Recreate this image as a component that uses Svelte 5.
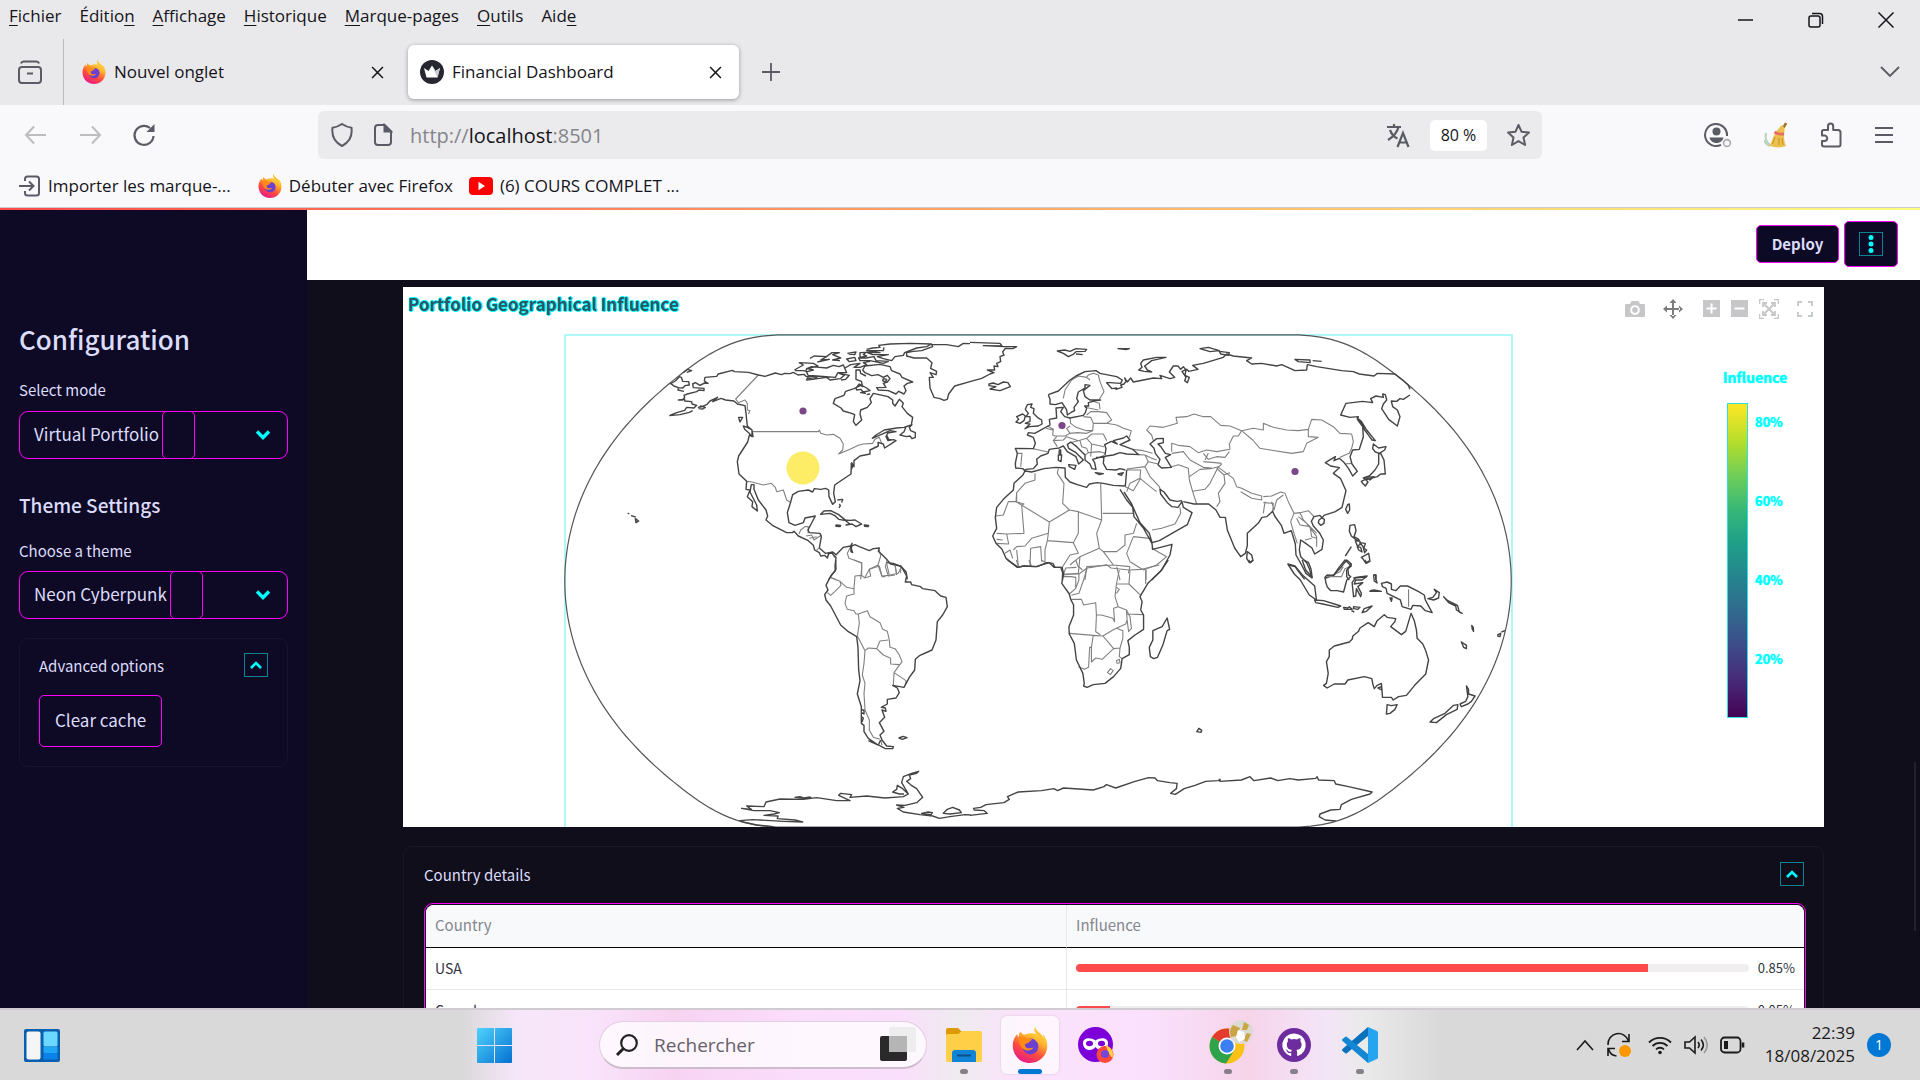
<script>
  const menus = [
    ['', 'F', 'ichier'],
    ['Éditio', 'n', ''],
    ['', 'A', 'ffichage'],
    ['', 'H', 'istorique'],
    ['', 'M', 'arque-pages'],
    ['', 'O', 'utils'],
    ['Aid', 'e', '']
  ];
  const ticks = ['80%', '60%', '40%', '20%'];
  const rows = [
    { country: 'USA', value: 85, label: '0.85%' },
    { country: 'Canada', value: 5, label: '0.05%' }
  ];

  // Outline of the globe in the Natural Earth projection.
  const cx = 1038;
  const cy = 581;
  const k = 173;
  function project(lon, lat) {
    const a = lat * lat;
    const b = a * a;
    return [
      cx + k * lon * (0.8707 - 0.131979 * a + b * (-0.013791 + b * (0.003971 * a - 0.001529 * b))),
      cy - k * lat * (1.007226 + a * (0.015085 + b * (-0.044475 + 0.028874 * a - 0.005916 * b)))
    ];
  }
  const rim = [];
  for (let i = -60; i <= 60; i++) rim.push(project(-Math.PI, (i / 60) * (Math.PI / 2)));
  for (let i = 60; i >= -60; i--) rim.push(project(Math.PI, (i / 60) * (Math.PI / 2)));
  const sphere = 'M' + rim.map((p) => p[0].toFixed(1) + ' ' + p[1].toFixed(1)).join('L') + 'Z';

  // Land outlines and country borders, one sheet per part of the world.
  const sheets = [
    {
      place: 'translate(550 320) scale(.33333)',
      coast: `M360 192 376 183 388 170 394 172 398 184 416 185 418 195 405 197 398 204 385 203 384 210 402 214 M362 190 372 198 385 203 M400 158 412 148 425 152 410 157
M358 287 380 278 404 271 410 262 432 264 440 256 426 252 425 245 404 243 404 238 385 240 398 240 404 232 402 226 412 222 440 215 447 210 462 212 462 205 430 203 428 192 436 188 450 196 464 189 474 190 463 183 465 172 500 169 505 162 547 151 553 155 596 157 625 165 645 169 676 159 694 164 704 160 720 161 730 157 744 165 762 163 768 169 800 172 790 178 772 174 770 180 830 172 840 180 871 176 883 166 868 160 898 166 887 178 873 180
M358 287 390 284 418 277 428 272 M444 264 452 258 466 262 458 267 446 266 M450 262 470 254 480 243 503 232 488 245 513 235 527 240 552 243 562 252 585 257 588 280 590 300 592 318 606 330 609 350 598 346 593 366 566 408 562 425 567 462 590 484 588 508 600 510 592 530 608 545 606 560 622 573 620 555 600 516 604 494 612 494 612 508 625 540 648 570 653 588 648 600 670 618 710 638 727 638 732 634 745 648 775 662 790 676 794 690 808 698 812 708 824 706 832 714 837 700 847 700 855 712
M857 703 848 696 826 700 808 684 814 650 810 640 778 638 774 630 796 588 765 594 760 608 735 616 717 608 712 578 722 546 728 524 745 514 775 510 788 516 793 506 812 508 827 505 836 510 837 530 848 553 856 545 851 520 854 495 876 480 903 462 904 430 912 440 912 422 930 408 960 402 960 390 985 378 984 367 1000 372 1004 384 1038 362 1030 359 1014 362 1008 350 1013 339 1038 335 1020 332 967 355 978 345 1003 330 1040 324 1062 322 1084 315 1088 292 1072 280 1056 260 1060 250 1048 238 1035 258 1028 250 1028 240 1014 230 970 220 960 236 964 248 952 262 932 270 930 282 935 300 918 316 910 305 914 284 905 280 880 273 873 264 850 250 855 236 882 226 887 214 912 206 932 196 938 200 934 184 918 178 918 150 930 150 932 160 948 168
M945 138 990 133 1020 140 1025 152 1050 162 1056 172 1088 186 1072 190 1062 198 1068 212 1062 222 1046 214 1038 222 1015 212 985 210 980 203 1008 202 1000 190 1012 186 1020 176 1012 166 1000 172 984 164 965 167 945 158 938 150Z
M733 150 760 135 748 128 790 130 804 138 772 146 790 150 772 155 760 152 735 152 M770 146 785 140 830 144 850 136 867 140 880 135 890 158 864 158 856 172 800 168 774 166 768 152Z M780 115 792 108 830 110 812 120 838 118 802 126 M826 112 846 98 868 98 848 104 872 114 848 120 870 122 M885 144 902 134 930 130 912 142 930 142 950 134 940 128 960 124 M892 100 918 96 914 104 896 102 M930 98 948 97 940 104 950 108 930 112Z M890 117 914 112 918 122 898 125Z M926 114 948 114 972 110 978 122 1015 124 1000 130 960 122 930 122Z
M950 88 968 84 990 82 986 76 1020 72 1080 70 1144 72 1130 80 1100 84 1064 98 1060 106 1035 110 1025 122 1000 116 982 110 1015 104 968 104 950 97 990 98 950 92 1000 92 1002 82
M918 204 928 192 950 204 960 212 940 216 932 208 920 210Z M932 218l10-3 4 5zM950 224l10-2M1000 176l10 2-4 8-8-4z
M1050 345 1062 335 1068 320 1086 314 1078 322 1082 332 1096 338 1096 352 1086 356 1080 348 1070 350Z M1010 346 1016 358 1026 360
M1260 71 1240 70 1225 80 1190 74 1145 73 1148 80 1115 92 1090 94 1070 98 1070 108 1092 114 1130 114 1146 128 1142 145 1160 154 1158 164 1140 158 1150 172 1138 172 1140 204 1152 232 1170 236 1182 241 1192 238 1196 222 1214 198 1260 185
M812 583 822 573 842 572 866 584 888 602 866 598 856 588 840 580Z M884 600 900 601 915 600 935 612 918 620 906 612 888 615 900 612Z M858 615l14 1-2 4-12-1zM943 615l13 1-2 4-10-1zM862 540l16-2-3 10M868 552l3 5-4 7M233 579l5 3M243 587l14 4M256 596l10 7-8 5z
M580 318 592 322 606 330 606 350 596 338 584 328Z M566 292l12 0-8 14zM884 426M905 428l4 8-4 10z
M837 778 845 764 856 752 855 738 858 712 850 705 M857 706 880 682 902 678 906 670 904 686 908 698 903 695 902 680 915 674 928 680 958 692 970 686 988 684 985 694 998 706 1010 718 1022 732 1052 738 1068 755 1072 778`,
      border: `M625 165 557 237 565 248 585 240 592 250 592 270 600 272 595 282 M608 335 805 335 808 330 812 340 830 345 850 343 870 355 880 372 878 390 866 402 900 388 925 376 940 372 968 370 975 358 988 352 995 370 M590 484 606 486 640 495 664 490 676 502 680 515 700 510 710 540 720 546 M747 642 752 630 765 620 775 620 774 640 M768 648 785 645 792 660 815 645 M778 655 800 650 M800 690 806 685 M836 700 832 710
M902 680 892 700 897 715 935 728 935 745 932 778 M988 690 992 708 984 735 996 770 M984 735 958 748 945 772 M1012 718 1006 740 1015 768 1035 765 M1035 735 1040 765 M1052 738 1052 760 M840 772 860 780 M996 770 1006 770`
    },
    {
      place: 'translate(970 320) scale(.33333)',
      coast: `M0 67 90 70 96 78 40 77 100 80 140 80 128 86 106 85 98 96 102 105 90 110 92 125 80 130 84 140 72 138 74 150 52 150 72 158 60 162 35 175 0 185
M57 192 70 189 84 194 100 186 114 188 121 200 90 212 60 207 78 200 57 197Z M262 93 284 90 300 94 318 86 350 88 345 94 318 95 308 104 295 110 280 100Z M318 102l20 2M444 86l34 0-10 3z
M506 150 516 142 512 130 520 120 560 112 588 112 545 122 524 138 532 150 545 156 522 154Z M690 86 715 82 748 92 720 95Z M748 94 778 98 775 106 752 102Z M975 118 1020 120 1020 128 985 125Z M1028 122l27 2
M235 224 265 213 300 180 318 168 345 155 378 152 390 160 440 170 457 180 452 190 420 188 410 188 426 206 440 204 438 208 456 202 452 195 462 192 468 184 464 174 472 186 482 174 490 186 550 174 575 176 570 166 600 176 614 172 598 156 610 138 624 138 632 148 640 140 648 150 645 166 658 172 652 188 644 182 648 172 636 154 650 148 656 154 684 148 668 136 700 130 720 124 760 112 770 102 790 108 845 114 830 122 845 132 875 130 920 138 935 134 975 152 1010 150 1012 134 1040 140 1115 152 1150 155 1168 162 1212 168 1222 160 1275 162 1298 180 1314 194 1320 208
M1320 225 1300 238 1290 236 1280 244 1264 243 1268 260 1282 270 1290 290 1282 318 1256 298 1235 266 1240 252 1250 240 1246 224 1238 222 1240 232 1218 228 1202 236 1208 248 1178 244 1128 250 1112 285 1140 292 1165 290 1162 298 1178 320 1180 350 1168 388 1148 390 1140 410 1146 432 1162 454 1148 468 1136 446 1120 425 1108 415 1092 422 1096 410 1066 428 1082 438 1108 443 1090 460 1112 476 1128 512 1116 562 1096 575 1062 586 1056 594 1050 586 1032 590 1024 604 1030 618 1048 638 1060 660 1056 688 1034 702 1026 684 1004 668 992 660 988 690 992 710 1010 728 1018 746 1026 774 1008 760 995 735 978 705 976 672 964 632 942 640 934 616 914 588 908 574 890 590 876 592 866 608 832 640 832 676 826 700 812 710 794 684 772 630 766 592 750 592 738 570 716 552 672 552 640 545 M636 542 620 544 600 540 582 516 570 508 572 522 592 548 606 560 624 562 636 545 640 562 666 578 652 614 606 640 568 662 546 668 538 640 510 608 484 550 462 516 M450 508 470 540 488 562 492 590 520 624 546 670 548 688 606 673 600 705 575 750 545 780
M470 450 466 498 430 496 400 490 382 488 358 492 350 502 322 494 300 486 286 472 285 444 258 442 222 446 185 456 165 453 158 466 132 490 130 510 100 538 80 562 76 592 80 625 68 648 78 670 96 688 108 715 142 742 160 738 198 740 238 728 252 742 272 742 278 758 277 780
M163 450 158 446 137 444 136 430 142 400 136 385 190 386 196 370 190 352 172 345 175 338 194 340 216 328 240 315 238 298 260 294 258 264 280 262 272 275 284 290 300 294 340 286 346 278 350 265 344 258 356 258 355 248 378 242 392 240 360 240 345 230 340 212 360 196 345 194 345 204 325 216 320 235 325 245 312 262 314 272 305 276 292 285 290 270 276 248 256 254 240 252 240 238 235 224
M162 454 168 448 190 446 202 432 200 418 212 408 234 400 238 388 258 385 268 384 280 378 292 395 318 410 326 432 340 420 318 398 296 385 292 374 302 366 320 380 345 405 345 420 360 432 366 446 378 448 374 428 368 418 382 414 402 408 400 430 410 448 438 450 450 446 466 450
M405 405 408 386 404 374 424 364 442 372 430 362 460 354 470 348 480 360 450 374 488 388 506 404 470 402 450 398 430 405 408 408 398 412 378 412 M296 434l22 2-4 12-16-8zM265 405l10 0-2 20-8-4zM268 390l4 0 0 12-5-2zM376 458l24 3-12 3zM444 462l16-4-6 8z
M540 372 560 356 580 355 580 368 564 372 574 382 586 400 602 404 586 412 592 422 604 442 575 444 564 434 570 418 556 400 552 385Z
M165 326 178 320 205 318 216 312 215 300 202 292 190 280 192 266 182 262 186 252 172 254 166 268 175 280 168 290 180 290 180 304 166 310 180 312Z M138 306 150 310 162 302 166 288 158 282 140 290 146 298Z
M832 695 845 705 849 722 838 728 830 715ZM1133 554l5-2 1 18-6 10-6-12zM1047 600l8-6 8 4-1 12-10 6-7-8z M1210 372 1226 384 1248 380 1244 390 1228 400 1216 396 1208 386Z M1232 400 1242 420 1246 462 1232 462 1222 470 1192 478 1180 474 1198 468 1215 450 1226 432 1226 402Z M1174 484 1186 478 1194 486 1186 498 1178 490ZM1190 472 1212 470 1200 480ZM1162 294 1174 304 1190 330 1216 362 1206 360 1196 346 1184 330 1176 310Z
M1140 616 1154 614 1158 632 1152 650 1166 658 1168 664 1156 658 1144 648 1138 634ZM1156 662l14 2 0 10-8 4zM1170 668l16 2-4 14zM1162 680l10 2 4 14-10-6zM1180 684l10 6-6 8zM1174 712 1196 700 1200 724 1188 730 1180 718ZM1126 708l18-28
M955 735 975 740 990 760 1004 778 M1064 775 1092 765 1105 745 1125 720 1144 738 1130 750 1130 770 1138 780 M1150 774l40-3M1212 765l6 0 0 14`,
      border: `M280 235 285 210 305 180 325 168 350 172 355 165 370 160 385 165 M350 172 360 180 M385 165 390 185 402 215 388 238 M370 244 388 250 390 268 M345 262 385 270 M350 285 362 275 385 275 410 278 425 300 410 310 370 310 362 292 340 290 M300 294 302 310 318 322 350 332 368 332 370 310 M410 310 440 315 460 325 484 332 478 352 M368 332 350 340 322 338 300 340 290 325 300 318 M300 340 285 348 255 348 248 345 250 328 232 318 M228 325 248 330 M250 362 280 360 290 350 325 362 350 355 365 342 400 342 410 362 M260 350 250 362 262 380 M325 362 300 368 M330 362 335 380 350 385 355 398 345 405 M350 355 365 372 402 380 M355 398 390 395 405 400 M365 372 362 410 M142 400 156 400 152 440 M190 386 234 396 M488 388 520 392 548 400 M505 404 525 405 545 415 560 420 M525 405 535 425 565 432 M535 425 525 440 470 447 M525 440 540 470 568 500 572 512 M470 450 512 450 510 475 480 490 470 515 M510 475 540 500 560 515 M512 475 490 512 466 500
M545 345 530 330 540 318 580 322 622 310 618 292 650 290 672 282 700 290 722 290 752 316 780 318 815 332 805 348 790 348 778 372 780 388 740 395 710 390 685 398 660 380 625 376 605 370 605 395 M545 345 550 362 M605 400 640 395 660 420 700 442 725 444 M600 442 625 434 655 445 658 480 668 515 680 552 M658 470 690 448 722 446 745 440 720 490 705 508 668 514 M740 445 762 465 780 458 M762 465 765 490 745 520 750 545 740 560 M700 400 715 418 740 410 765 412 778 395 M700 425 735 428 755 430 M715 400 705 420 M755 432 745 442 790 475 800 500 815 505 845 520 875 528 875 540 845 535 812 515 M880 530 905 528 932 516 945 520 955 545 972 580 990 578 1015 572 1032 590 M885 545 880 580 M880 548 910 550 908 574 M905 545 912 570 920 540 940 525 M972 580 962 605 972 640 982 670 M985 590 1010 610 1040 650 1040 680 M980 595 990 615 1020 620 1025 650 1040 655 M1005 660 1025 655 M990 578 1000 600 1040 640
M815 332 850 325 880 330 880 310 910 322 950 330 985 332 1015 328 1015 350 1045 352 1010 370 1000 395 965 400 900 390 870 385 848 360Z M1015 328 1025 298 1055 300 1090 320 1110 340 1145 342 1150 365 1145 385 1138 400 1110 412 M1125 432 1145 430
M195 460 195 480 165 490 140 518 138 545 238 606 298 570 325 575 395 600 392 490 M265 445 262 460 282 490 278 550 298 570 M138 545 162 552 155 555 162 640 110 642 M140 518 140 545 115 545 100 585 78 588 M238 606 235 640 185 655 165 678 140 680 130 690 M325 575 325 640 310 668 232 662 225 690 225 725 M235 640 232 662 M80 640 110 642 116 672 78 670 M80 658 98 660 M105 700 120 690 128 715 M140 690 145 738 M180 738 182 685 212 680 215 725 M398 580 490 580 M395 600 380 640 388 685 330 710 300 735 M388 685 400 695 440 695 465 675 465 645 490 640 500 610 M490 650 540 655 545 670 M490 650 470 700 480 725 520 750 560 735 590 710 545 685 M400 695 430 735 480 740 M310 668 325 700 300 705 275 745 M330 710 325 760 278 765 M350 740 345 780 M430 735 350 740 M440 740 450 780 M528 750 528 780 M480 740 475 760 M546 630 575 625 615 612 632 580 630 562 M1068 775 1110 755 1120 740`
    },
    {
      place: 'translate(550 560) scale(.33333)',
      coast: `M857 0 858 28 840 52 828 76 834 90 824 104 828 120 842 138 872 195 895 215 920 230 924 262 926 330 930 362 922 402 934 440 934 490 942 496 942 515 955 535 980 552 1006 566 1028 566 1030 560 1010 558 996 540 990 525 1002 514 988 488 1004 472 996 450 1008 454 1006 444 994 442 1012 432 1012 418 1038 414 1048 398 1042 384 1028 376 1062 382 1078 352 1094 330 1096 298 1110 286 1146 270 1158 240 1162 185 1178 165 1192 140 1188 112 1172 108 1155 92 1118 86 1112 80 1085 74 1082 66 1066 66 1070 48 1054 20 1030 10 1010 8 M934 450l8 0 0 12-8-4zM934 470l6 4-4 12M955 542 985 555 992 540 M1047 534l12-5 12 4-14 5z
M568 782 608 779 700 784 758 786 735 780 682 776 684 768 642 766 672 762 688 758 660 752 612 752 575 745 604 748 590 738 642 740 648 726 690 717 760 718 800 713 860 722 900 722 866 706 872 700 905 704 900 712 950 708 1005 714 1060 710 1075 702 1058 686 1042 676 1040 688 1028 696 1048 702 1062 702 M1075 702 1055 668 1060 650 1085 640 1106 634 1100 640 1078 645 1082 656 1070 664 1084 676 1100 686 1118 712 1100 728 1065 736 1040 735 1062 742 1042 745 1060 756 1110 764 1148 768 1168 775 1200 770 1245 764 1262 765 M1115 760l20-4 12 2-4 6zM1180 760 1192 748 1208 742 1228 750 1234 758 1200 762ZM572 784 620 795 670 800 M735 712l15-2 10 4zM762 714l18-3 4 4z`,
      border: `M840 52 870 64 873 76 855 94 842 106 832 98 M870 64 890 82 912 86 912 102 890 108 885 130 892 148 912 152 918 162 925 162 952 152 960 170 990 188 998 208 1012 214 1018 240 1020 262 1035 266 1048 285 1056 305 1032 338 1030 376 M1032 338 1068 362 1066 375 M925 162 928 190 922 228 945 272 955 264 980 266 990 243 1015 240 M980 266 1000 285 1022 295 1022 312 1048 314 M945 272 942 310 937 345 945 370 942 400 945 450 958 480 958 510 970 532 990 538 M992 540 996 556 M912 86 915 48 935 46 945 54 962 48 958 28 988 18 996 48 1018 46 1045 40 1054 20 M935 46 935 10 912 0 M1010 10 1018 46 M1035 14 1040 42`
    },
    {
      place: 'translate(970 560) scale(.35714 .33333)',
      coast: `M105 0 135 22 150 18 188 20 215 8 232 10 238 22 258 22 262 42 257 70 278 102 282 118 290 135 290 165 277 200 278 222 292 250 298 300 316 340 320 370 318 378 328 382 345 374 378 370 402 350 422 325 426 296 446 284 446 262 442 242 462 225 486 208 486 165 478 150 482 125 476 110 498 70 535 32 555 0
M552 174 559 208 552 212 540 255 525 292 514 296 505 290 502 262 512 240 512 212 538 200Z M780 0 785 8 792 0 M635 515l6-10 8 6-2 6z
M890 12 910 18 930 44 965 78 970 120 950 105 925 60 908 42Z M930 0 940 30 958 52 955 28 948 8 935 0 M965 120 990 122 1038 138 1030 142 988 132 968 128ZM1046 142l12 2 4-4 8 8-22 0zM1068 152l8 4M1074 140l18 2-6 6-12-2zM1098 158l6-12 22-8-16 16z
M994 52 1000 45 1018 46 1040 20 1055 0 1068 12 1058 25 1060 45 1066 50 1055 60 1046 96 1028 92 1010 92 1000 80 996 66Z M1072 90 1070 68 1080 52 1112 48 1098 60 1080 60 1076 72 1100 68 1086 80 1096 100 1094 110 1082 86 1080 108 1074 110ZM1130 45l6 0 0 12 4 12-8-6zM1118 94l20 0 14 0-20-4-12 2M1176 114l6 0-2 10zM1105 0l6 8 6-6
M1152 70 1168 66 1180 72 1180 88 1192 92 1205 78 1225 78 1255 94 1272 105 1275 120 1294 158 1275 152 1262 138 1240 136 1235 148 1210 140 1205 120 1168 100 1165 85 1155 80ZM1282 116l14-4 10-14-6-10 14 10-2 16-14 6zM1326 110 1338 122 1365 136 1370 156 1378 160 1362 150 1360 138 1340 128ZM1405 196l4 6 1 12-4-8zM1376 246l14 10 0 10-8-4zM1478 224l8-4-2 10-6-2zM1488 216l10-4
M1000 384 990 376 998 370 1003 340 998 305 1006 290 1006 270 1020 258 1062 246 1070 238 1072 228 1088 214 1092 204 1115 188 1132 200 1140 182 1160 164 1168 172 1192 176 1190 184 1178 200 1208 224 1220 214 1235 160 1244 182 1250 210 1252 235 1268 252 1276 272 1284 300 1276 342 1245 376 1222 406 1200 410 1185 420 1180 412 1155 412 1152 370 1140 376 1132 386 1128 372 1125 356 1104 350 1058 360 1050 372 1020 372Z M1142 384l10-4 0 10zM1168 434 1180 437 1196 434 1190 448 1176 460 1166 462ZM1390 378 1396 388 1396 402 1414 408 1404 424 1394 432 1376 440 1372 432 1388 424 1394 410ZM1366 434 1364 448 1334 464 1306 488 1288 486 1298 476 1330 460 1354 436Z
M0 766 48 760 40 752 12 750 10 745 30 742 45 734 95 728 110 718 105 710 135 696 200 692 235 686 245 692 262 684 345 690 375 680 382 674 408 684 460 665 500 653 518 654 525 662 560 668 580 670 578 686 562 700 575 703 600 686 630 676 660 664 695 662 700 658 700 664 760 660 784 650 795 662 842 654 862 662 895 656 920 660 968 655 972 650 976 660 1020 662 1024 672 1060 680 1126 696 1120 702 1068 718 1040 734 1036 748 1010 750 980 762 978 770 994 780 1024 783`,
      border: `M262 42 305 42 328 24 340 22 382 14 395 24 445 30 480 28 530 15 M262 42 262 50 282 50 296 52 296 85 278 102 M305 42 305 60 296 85 M328 24 318 60 305 100 284 106 M284 118 312 118 318 135 352 128 354 165 368 165 400 175 405 185 402 145 415 140 438 150 440 180 436 192 410 205 400 210 372 228 345 226 278 220 M354 165 352 215 365 224 M345 226 340 262 335 262 332 322 320 328 304 320 M340 262 340 306 352 294 370 298 402 266 420 264 428 235 428 212 410 205 M372 228 390 250 402 266 M420 264 418 290 426 296 M385 338l8-12 8 6-8 12zM410 302l8-4 2 10-8 2zM415 140 406 110 410 72 418 30 M410 72 445 72 478 106 M445 72 448 30 M408 80l10 8-8 12M440 162 486 164 M438 150 448 170 452 205 444 215 440 180 M492 28 492 72 M296 0 302 18 315 30 M130 0 135 18 M165 0 172 18 M200 0 212 8 M262 42 268 24 298 22 M1000 50 1040 50 1050 26 1062 20 M1228 88 1228 140`
    }
  ];
</script>

{#snippet fox(size)}
  <svg width={size} height={size} viewBox="0 0 24 24" aria-hidden="true">
    <defs>
      <linearGradient id="fx" x1=".8" y1="0" x2=".3" y2="1">
        <stop offset="0" stop-color="#fff44f" /><stop offset=".35" stop-color="#ffb32d" />
        <stop offset=".65" stop-color="#ff4f3a" /><stop offset="1" stop-color="#e5178c" />
      </linearGradient>
    </defs>
    <path fill="url(#fx)" d="M15.5 0c-1 2-.3 3.300 1 4.600C14 4 11 4 8.800 5.200 7 5 6.200 4.200 5.800 3 4.700 4 4.500 5.500 4.700 6.600 3.900 6.200 3.500 5.400 3.400 4.600 1 7.500.2 10.500.6 14c.8 5.800 5.500 10 11.400 10 6.400 0 11.500-5 11.500-11.300 0-3.500-1.300-6.300-2.900-8 .2 1 .3 1.700.2 2.500C19.500 3.900 16.300 3 15.500 0z" />
    <path fill="#ffbd3a" d="M16.500 4.600c3.800 2.200 5.400 6.200 3.400 10.200 3-4.500 1-9-1.900-10.800-1.500-1-2.200-2-2.500-4-1 2-.3 3.300 1 4.600z" />
    <circle cx="12.300" cy="13" r="5.300" fill="#6b3fd0" />
    <path fill="#ff8a16" d="M4.700 7c2-1.200 4-.4 5.300.7 1.200-.2 2.700 0 3.600 1-1.200.2-1.400.8-2.200 1.500-1 .8-2.300.7-2.700 1.500-.2.700.2 1.700 1 2.200 1.700 1 3-.2 4.600 0-1.400 1.600-3.300 2.200-5 1.600C5.500 14.500 4.500 10.500 4.700 7z" />
  </svg>
{/snippet}

{#snippet cross(size)}
  <svg width={size} height={size} viewBox="0 0 12 12" aria-hidden="true"><path d="M1 1l10 10M11 1L1 11" stroke="#15141a" stroke-width="1.400" fill="none" /></svg>
{/snippet}

{#snippet combo(id, value, others)}
  <div class="combo">
    <select {id}>
      <option>{value}</option>
      {#each others as o}<option>{o}</option>{/each}
    </select>
    <span class="caret-box"></span>
    <svg class="chev" width="16" height="12" viewBox="0 0 16 12" aria-hidden="true"><path d="M2 2.500L8 8.500 14 2.500" fill="none" stroke="#0ff" stroke-width="3.400" /></svg>
  </div>
{/snippet}

{#snippet fold(label)}
  <button class="fold" aria-label={label}>
    <svg width="14" height="10" viewBox="0 0 14 10" aria-hidden="true"><path d="M2 8l5-5 5 5" fill="none" stroke="#0ff" stroke-width="2.600" /></svg>
  </button>
{/snippet}

<div class="window">
  <header class="top">
    <div class="menubar">
      <nav>
        {#each menus as m}<a href="#menu">{m[0]}<u>{m[1]}</u>{m[2]}</a>{/each}
      </nav>
      <div class="controls">
        <button aria-label="Réduire"><svg width="16" height="16" viewBox="0 0 16 16"><path d="M0 8h15" stroke="#15141a" stroke-width="1.500" /></svg></button>
        <button aria-label="Restaurer"><svg width="16" height="16" viewBox="0 0 16 16" fill="none" stroke="#15141a" stroke-width="1.500"><rect x="1" y="4" width="11" height="11" rx="2" /><path d="M4 1.500h7.500a3 3 0 0 1 3 3V12" /></svg></button>
        <button aria-label="Fermer"><svg width="16" height="16" viewBox="0 0 16 16"><path d="M.5.5l15 15M15.500.5l-15 15" stroke="#15141a" stroke-width="1.500" /></svg></button>
      </div>
    </div>
    <div class="tabs">
      <button class="view" aria-label="Firefox View">
        <svg width="26" height="26" viewBox="0 0 26 26" fill="none" stroke="#5b5b66" stroke-width="2"><rect x="2" y="8" width="22" height="16" rx="3" /><path d="M4 4.500C4.500 3 5.500 2.500 7 2.500h12c1.500 0 2.500.5 3 2" /><path d="M10 14.500h6" /></svg>
      </button>
      <div class="tab">
        {@render fox(24)}
        <span>Nouvel onglet</span>
        <button aria-label="Fermer l’onglet">{@render cross(13)}</button>
      </div>
      <div class="tab active">
        <svg width="24" height="24" viewBox="0 0 24 24" aria-hidden="true"><circle cx="12" cy="12" r="12" fill="#262730" /><path d="M4 8l4.500 3L12 5.500l3.500 5.500L20 8l-2.500 9.500h-11z" fill="#fff" /><path d="M12 5.500l3.500 5.500L20 8l-2.500 9.500z" fill="#c9c9cf" /></svg>
        <span>Financial Dashboard</span>
        <button aria-label="Fermer l’onglet">{@render cross(13)}</button>
      </div>
      <button class="plus" aria-label="Nouvel onglet"><svg width="18" height="18" viewBox="0 0 18 18"><path d="M9 0v18M0 9h18" stroke="#5b5b66" stroke-width="1.800" /></svg></button>
      <button class="list" aria-label="Lister les onglets"><svg width="20" height="12" viewBox="0 0 20 12"><path d="M1 1l9 9 9-9" stroke="#5b5b66" stroke-width="1.800" fill="none" /></svg></button>
    </div>
  </header>

  <div class="navbar">
    <div class="history">
      <button aria-label="Reculer"><svg width="24" height="20" viewBox="0 0 24 20"><path d="M22 10H2M10 1.500L2 10l8 8.500" stroke="#bcbcc1" stroke-width="2" fill="none" /></svg></button>
      <button aria-label="Avancer"><svg width="24" height="20" viewBox="0 0 24 20"><path d="M2 10h20M14 1.500L22 10l-8 8.500" stroke="#bcbcc1" stroke-width="2" fill="none" /></svg></button>
      <button aria-label="Actualiser"><svg width="24" height="24" viewBox="0 0 24 24"><path d="M21.500 13A9.500 9.500 0 1 1 18 5" stroke="#5b5b66" stroke-width="2.200" fill="none" /><path d="M22.500 1v8h-8z" fill="#5b5b66" /></svg></button>
    </div>
    <div class="url">
      <svg width="24" height="26" viewBox="0 0 24 26" fill="none" stroke="#5b5b66" stroke-width="2"><path d="M12 2c3 2 6 3.200 9.500 3.800C22.500 14 19 20.500 12 24 5 20.500 1.500 14 2.500 5.800 6 5.200 9 4 12 2z" /></svg>
      <svg width="20" height="24" viewBox="0 0 20 24" fill="none" stroke="#5b5b66" stroke-width="2"><path d="M11.500 2H5a3 3 0 0 0-3 3v14a3 3 0 0 0 3 3h10a3 3 0 0 0 3-3V8.500z" /><path d="M11.500 2v6.500H18z" fill="#5b5b66" /></svg>
      <label class="address" aria-label="Adresse"><span>http://</span><b>localhost</b><span>:8501</span></label>
      <svg width="25" height="25" viewBox="0 0 25 25" fill="none" stroke="#5b5b66" stroke-width="2.200"><path d="M1 4h14M8 1v3M12.500 4C11 10 7 14 2 17M4 7c1.500 4 4 7 7.500 8.500M11.500 24l5.500-14 5.500 14M13.500 19.500h7" /></svg>
      <button class="zoom">80 %</button>
      <svg width="25" height="25" viewBox="0 0 25 25" fill="none" stroke="#5b5b66" stroke-width="2"><path stroke-linejoin="round" d="M12.500 2l3.100 6.800 7.400.8-5.500 5 1.600 7.400-6.600-3.800L5.900 22l1.600-7.400-5.500-5 7.400-.8z" /></svg>
    </div>
    <div class="tools">
      <button aria-label="Compte"><svg width="28" height="26" viewBox="0 0 28 26"><path d="M17 22.800A11 11 0 1 1 23 14" fill="none" stroke="#5b5b66" stroke-width="2" /><circle cx="12.500" cy="9.500" r="4" fill="#5b5b66" /><path d="M5.500 15.500h14c-1 4-4 5.500-7 5.500s-6-1.500-7-5.500z" fill="#5b5b66" /><circle cx="23" cy="21" r="4.500" fill="#f9f9fb" /><circle cx="23" cy="21" r="3.400" fill="none" stroke="#a9a9b0" stroke-width="1.600" /></svg></button>
      <button aria-label="Nettoyer"><svg width="24" height="26" viewBox="0 0 24 26"><path d="M2 11c-1 5 0 9 4 12M0 18c1 3 3 5 6 6" stroke="#b9d2bd" stroke-width="2" fill="none" /><path d="M22 1c-1 3-3 4-4 7" stroke="#9a7420" stroke-width="2.600" fill="none" /><path d="M18 3c3 2 3 6 2 9 0 4 0 8 2 12-5 2-11 2-17-.5C9 20 8 12 18 3z" fill="#ecc04c" /><path d="M10.500 10c3 2 6 2.500 9.500 2" stroke="#e86a62" stroke-width="2.800" fill="none" /><path d="M11 15l-2.500 7M15 16v7M18 16l1 7" stroke="#c48f27" fill="none" /></svg></button>
      <button aria-label="Extensions"><svg width="22" height="26" viewBox="0 0 22 26" fill="none" stroke="#5b5b66" stroke-width="2"><path stroke-linejoin="round" d="M2 9.500C2 8.500 2.500 8 3.500 8H8V4.200a2.600 2.600 0 0 1 5.200 0V8H18a2.500 2.500 0 0 1 2.500 2.500v12A2 2 0 0 1 18.500 24.500H4a2 2 0 0 1-2-2V19h2.500a2.700 2.700 0 0 0 0-5.400H2z" /></svg></button>
      <button aria-label="Menu"><svg width="20" height="18" viewBox="0 0 20 18"><path d="M1 2h18M1 9h18M1 16h18" stroke="#5b5b66" stroke-width="1.800" /></svg></button>
    </div>
  </div>

  <div class="bookmarks">
    <a href="#import"><svg width="22" height="22" viewBox="0 0 22 22" fill="none" stroke="#5b5b66" stroke-width="2"><path d="M6 6V4a2.500 2.500 0 0 1 2.500-2.500h9A2.500 2.500 0 0 1 20 4v14a2.500 2.500 0 0 1-2.500 2.500h-9A2.500 2.500 0 0 1 6 18v-2M0 11h13M10 6.500l4.500 4.500-4.500 4.500" /></svg>Importer les marque-...</a>
    <a href="#start" class="second">{@render fox(24)}Débuter avec Firefox</a>
    <a href="#course"><svg width="24" height="18" viewBox="0 0 24 18"><rect width="24" height="18" rx="4" fill="#f00" /><path d="M9.500 4.800v8.400L16 9z" fill="#fff" /></svg>(6) COURS COMPLET ...</a>
  </div>

  <div class="rainbow"></div>

  <div class="page">
    <aside>
      <h2>Configuration</h2>
      <label for="mode">Select mode</label>
      {@render combo('mode', 'Virtual Portfolio', [])}
      <h3>Theme Settings</h3>
      <label for="theme">Choose a theme</label>
      {@render combo('theme', 'Neon Cyberpunk', [])}
      <section class="advanced">
        <div class="head"><span>Advanced options</span>{@render fold('Advanced options')}</div>
        <button class="clear">Clear cache</button>
      </section>
    </aside>

    <main>
      <div class="appbar">
        <button class="deploy">Deploy</button>
        <button class="dots" aria-label="Menu"><span><svg width="6" height="20" viewBox="0 0 6 20" fill="#0ff"><circle cx="3" cy="3.500" r="2.500" /><circle cx="3" cy="10" r="2.500" /><circle cx="3" cy="16.500" r="2.500" /></svg></span></button>
      </div>

      <div class="content">
        <section class="chart">
          <div class="charthead">
            <h4>Portfolio Geographical Influence</h4>
            <div class="modebar">
              <svg width="20" height="18" viewBox="0 0 20 18"><path fill="#c7c7c9" fill-rule="evenodd" d="M1 4h4l1.500-3h7L15 4h4q1 0 1 1v11q0 1-1 1H1q-1 0-1-1V5q0-1 1-1zm9 1.200a4.800 4.800 0 1 0 .01 0zm0 1.900a2.900 2.900 0 1 1-.01 0z" /></svg>
              <svg class="m1" width="20" height="20" viewBox="0 0 20 20" fill="#7d7d80"><path d="M9 3h2v14H9zM3 9h14v2H3zM10 0l3.500 4h-7zM10 20l3.500-4h-7zM0 10l4-3.500v7zM20 10l-4-3.500v7z" /></svg>
              <svg class="m2" width="17" height="17" viewBox="0 0 17 17"><rect width="17" height="17" fill="#c7c7c9" /><path d="M8.500 3.500v10M3.500 8.500h10" stroke="#fff" stroke-width="2" /></svg>
              <svg class="m3" width="17" height="17" viewBox="0 0 17 17"><rect width="17" height="17" fill="#c7c7c9" /><path d="M3.500 8.500h10" stroke="#fff" stroke-width="2" /></svg>
              <svg class="m3" width="20" height="20" viewBox="0 0 20 20" fill="none" stroke="#c7c7c9"><path d="M.7 5V.7H5M15 .7h4.300V5M19.300 15v4.300H15M5 19.300H.7V15" stroke-width="1.300" /><path d="M5 5l10 10M15 5L5 15" stroke-width="2" /><path d="M4 8V4h4M12 4h4v4M16 12v4h-4M8 16H4v-4" stroke-width="1.800" /></svg>
              <svg class="m4" width="16" height="16" viewBox="0 0 16 16" fill="none" stroke="#c7cbce" stroke-width="2"><path d="M1 5V1h4M11 1h4v4M15 11v4h-4M5 15H1v-4" /></svg>
            </div>
          </div>
          <div class="plot">
            <svg class="map" viewBox="564 334 949 493" role="img" aria-label="Portfolio Geographical Influence">
              <rect x="565" y="335" width="947" height="500" fill="none" stroke="#8ff6f6" stroke-width="1.400" />
              <path d={sphere} fill="none" stroke="#555" stroke-width="1.200" />
              {#each sheets as s}
                <g transform={s.place}>
                  <path class="border" d={s.border} />
                  <path class="coast" d={s.coast} />
                </g>
              {/each}
              <circle cx="803" cy="411" r="3.600" fill="#7b4788" />
              <circle cx="803" cy="468" r="16.500" fill="#fdec66" />
              <circle cx="1062" cy="425.500" r="3.600" fill="#7b4788" />
              <circle cx="1295" cy="471.500" r="3.600" fill="#7b4788" />
            </svg>
            <div class="legend">
              <p>Influence</p>
              <div class="scale">
                <div class="bar"></div>
                <ul>
                  {#each ticks as t}<li>{t}</li>{/each}
                </ul>
              </div>
            </div>
          </div>
        </section>

        <section class="details">
          <div class="head"><span>Country details</span>{@render fold('Country details')}</div>
          <div class="frame">
            <table>
              <thead><tr><th>Country</th><th>Influence</th></tr></thead>
              <tbody>
                {#each rows as r}
                  <tr>
                    <td>{r.country}</td>
                    <td><div class="meter"><div class="track"><div class="fill" style="width: {r.value}%"></div></div><span>{r.label}</span></div></td>
                  </tr>
                {/each}
              </tbody>
            </table>
          </div>
        </section>
      </div>
      <div class="scroll"></div>
    </main>
  </div>

  <footer>
    <button class="widgets" aria-label="Widgets"><svg width="36" height="33" viewBox="0 0 36 33"><rect width="36" height="33" rx="2" fill="#0a5fae" /><rect x="2.500" y="2.500" width="14" height="28" rx="2" fill="#f5f5f5" /><rect x="19.500" y="2.500" width="14" height="15" rx="1.500" fill="#6bd9ff" /><rect x="19.500" y="18" width="14" height="6" fill="#21a5f5" /><rect x="19.500" y="24" width="14" height="6.500" rx="1" fill="#0a84e8" /></svg></button>
    <button class="start" aria-label="Démarrer"><svg width="35" height="35" viewBox="0 0 35 35"><defs><linearGradient id="win" x2="1" y2="1"><stop offset="0" stop-color="#4fd3fd" /><stop offset="1" stop-color="#0570d0" /></linearGradient></defs><path fill="url(#win)" d="M1 0h16v17H0V1q0-1 1-1zM18 0h16q1 0 1 1v16H18zM0 18h17v17H1q-1 0-1-1zM18 18h17v16q0 1-1 1H18z" /></svg></button>
    <label class="search">
      <svg width="24" height="24" viewBox="0 0 24 24" fill="none" stroke="#222" stroke-width="2.200"><circle cx="14" cy="10" r="7.800" /><path d="M8.500 15.500L2 22" stroke-width="3" /></svg>
      <input type="text" placeholder="Rechercher" />
      <svg width="36" height="36" viewBox="0 0 36 36"><rect y="9" width="27" height="25" rx="2" fill="#2a2a2a" /><rect x="9" width="27" height="25" rx="2" fill="#ededed" /><rect x="9" y="9" width="18" height="16" fill="#b5b5b5" /></svg>
    </label>
    <button class="app explorer on" aria-label="Explorateur"><svg width="36" height="34" viewBox="0 0 36 34"><path d="M0 2q0-2 2-2h10l4 4v6H0z" fill="#dd9a05" /><path d="M0 8q0-2 2-2h10l4-3h18q2 0 2 2v27q0 2-2 2H2q-2 0-2-2z" fill="#ffcf48" /><path d="M6 34V25q0-3 3-3h18q3 0 3 3v9z" fill="#1284d8" /><path d="M11 27.500h14" stroke="#0b4f8a" stroke-width="2" /></svg></button>
    <button class="app current" aria-label="Firefox">{@render fox(36)}</button>
    <button class="app" aria-label="Navigation privée"><svg width="36" height="36" viewBox="0 0 36 36"><circle cx="17.500" cy="17.500" r="17.500" fill="#7d00d8" /><path d="M5 16c0-6 8-6 12.500-2.500C22 10 30 10 30 16c0 8-9 9-12.500 4C14 25 5 24 5 16z" fill="#fff" /><ellipse cx="11.500" cy="16.500" rx="3.500" ry="2.800" fill="#7d00d8" /><ellipse cx="23.500" cy="16.500" rx="3.500" ry="2.800" fill="#7d00d8" /><g transform="translate(18 18)"><circle cx="9" cy="9.500" r="8.500" fill="#ff4a3b" /><path d="M10 0c6 3 8 8 6.500 13-2-2-5-5-6.500-13z" fill="#ffd23d" /><circle cx="9" cy="9" r="4" fill="#7746d8" /></g></svg></button>
    <button class="app chrome on" aria-label="Chrome"><svg width="46" height="44" viewBox="0 0 46 44"><circle cx="18" cy="26" r="17.500" fill="#fbc116" /><path d="M18 26L3 17A17.500 17.500 0 0 1 33.200 17.300z" fill="#e33b2e" /><path d="M3 17a17.500 17.500 0 0 0 14 26.500L25.500 30 18 26z" fill="#2fa24c" /><circle cx="18" cy="26" r="8.500" fill="#fff" /><circle cx="18" cy="26" r="6.800" fill="#3c7ff0" /><circle cx="32" cy="12" r="12" fill="#dcdad2" /><path d="M24 5l7 3-3 8-6 1q-3-6 2-12zM35 2l5 3-2 5-5 0zM38 13l4 1-4 8-4-2z" fill="#c9a544" /><path d="M29 10l6 2 1 7-6 3-3-5z" fill="#fff" /></svg></button>
    <button class="app on" aria-label="GitHub Desktop"><svg width="34" height="34" viewBox="0 0 34 34"><circle cx="17" cy="17" r="17" fill="#6e2d9e" /><path d="M17 5.500A11.500 11.500 0 0 0 13.400 28c.6 0 .8-.3.8-.6v-2.300c-3.200.7-3.900-1.300-3.900-1.300-.5-1.300-1.300-1.700-1.300-1.700-1-.7.1-.7.1-.7 1.200.1 1.800 1.200 1.800 1.200 1 1.800 2.700 1.300 3.400 1 .1-.8.400-1.300.7-1.600-2.500-.3-5.200-1.300-5.200-5.700 0-1.200.4-2.300 1.200-3.100-.1-.3-.5-1.500.1-3 0 0 1-.3 3.200 1.200a11 11 0 0 1 5.800 0c2.200-1.500 3.200-1.200 3.200-1.200.6 1.500.2 2.700.1 3 .7.800 1.200 1.900 1.200 3.100 0 4.400-2.700 5.400-5.300 5.700.4.400.8 1.100.8 2.100v3.200c0 .3.200.7.8.6A11.500 11.500 0 0 0 17 5.500z" fill="#fff" /></svg></button>
    <button class="app on" aria-label="Visual Studio Code"><svg width="36" height="36" viewBox="0 0 36 36"><path d="M26 0l9 4q1 .5 1 1.500v25q0 1-1 1.500l-9 4z" fill="#25a5f0" /><path d="M26 0v9L5 26q-1 1-2 0l-2.500-2q-1-1 0-2z" fill="#0a71bd" /><path d="M26 36v-9L5 10q-1-1-2 0L.5 12q-1 1 0 2z" fill="#1487d4" /></svg></button>
    <div class="tray">
      <svg width="18" height="12" viewBox="0 0 18 12"><path d="M1 11l8-9 8 9" fill="none" stroke="#1b1b1b" stroke-width="1.600" /></svg>
      <svg width="26" height="26" viewBox="0 0 26 26" fill="none" stroke="#1b1b1b" stroke-width="1.600"><path d="M2 13A10.500 10.500 0 0 1 22.500 9M23 2v7.500h-7M2 24v-7.500h7M2.500 17c1 4 4 6.500 8 7" /><circle cx="19" cy="19" r="6" fill="#ff9800" stroke="none" /></svg>
      <svg class="wifi" width="24" height="20" viewBox="0 0 24 20" fill="none" stroke="#1b1b1b" stroke-width="1.800"><path d="M1 7.500a15.500 15.500 0 0 1 22 0M4.500 11a10.500 10.500 0 0 1 15 0M8 14.500a5.500 5.500 0 0 1 8 0" /><circle cx="12" cy="17.500" r="1.800" fill="#1b1b1b" stroke="none" /></svg>
      <svg width="24" height="20" viewBox="0 0 24 20" fill="none" stroke="#1b1b1b" stroke-width="1.600"><path d="M1 7h4.500L11 2v16l-5.500-5H1zM14 7c1.600 2 1.600 4 0 6M17 4.500c3 3.500 3 7.500 0 11" /><path d="M20 2c4 5 4 11 0 16" stroke="#999" /></svg>
      <svg width="25" height="18" viewBox="0 0 25 18" fill="none" stroke="#1b1b1b" stroke-width="1.800"><rect x="1" y="1.500" width="19.500" height="15" rx="3.500" /><path d="M23 6.500v5" stroke-width="2.600" /><rect x="4" y="5" width="4" height="8" fill="#1b1b1b" stroke="none" /></svg>
      <div class="clock"><span>22:39</span><span>18/08/2025</span></div>
      <span class="badge">1</span>
    </div>
  </footer>
</div>

<style>
  :global(body) {
    margin: 0;
    overflow: hidden;
  }
  .window {
    height: 100vh;
    display: flex;
    flex-direction: column;
    font-family: 'Open Sans', 'Noto Sans', sans-serif;
    font-size: 17px;
    line-height: 24px;
    color: #15141a;
    background: #f9f9fb;
  }
  .window *,
  .window *::before,
  .window *::after {
    box-sizing: border-box;
  }
  button {
    font: inherit;
    color: inherit;
    background: none;
    border: 0;
    padding: 0;
    display: flex;
    align-items: center;
    justify-content: center;
  }
  a {
    color: inherit;
    text-decoration: none;
  }
  svg {
    display: block;
    flex: none;
  }
  h2,
  h3,
  h4,
  p,
  ul {
    margin: 0;
    padding: 0;
    list-style: none;
  }

  .top {
    background: #e9e9eb;
    height: 105px;
    flex: none;
  }
  .menubar {
    height: 39px;
    display: flex;
    justify-content: space-between;
  }
  nav {
    display: flex;
    gap: 18px;
    padding: 4px 0 0 9px;
  }
  u {
    text-underline-offset: 3px;
  }
  .controls {
    display: flex;
    gap: 54px;
    padding-right: 26px;
  }
  .tabs {
    height: 66px;
    display: flex;
    align-items: center;
  }
  .view {
    width: 64px;
    height: 66px;
    padding-right: 3px;
    border-right: 1px solid #b9b9be;
    flex: none;
  }
  .tab {
    width: 331px;
    height: 54px;
    margin-left: 6px;
    padding: 0 17px 0 12px;
    display: flex;
    align-items: center;
    gap: 8px;
    border-radius: 6px;
  }
  .tab span {
    flex: 1;
  }
  .tab.active {
    background: #fff;
    box-shadow: 0 1px 4px rgba(0, 0, 0, 0.35);
    margin-left: 7px;
  }
  .plus {
    margin-left: 23px;
  }
  .list {
    margin-left: auto;
    padding-right: 20px;
  }

  .navbar {
    height: 60px;
    flex: none;
    display: flex;
    align-items: center;
  }
  .history {
    width: 318px;
    display: flex;
    gap: 30px;
    padding-left: 24px;
    flex: none;
  }
  .url {
    flex: 1 1 0;
    height: 48px;
    border-radius: 6px;
    background: #ebebed;
    display: flex;
    align-items: center;
    padding: 0 11px 0 12px;
    gap: 19px;
  }
  .address {
    flex: 1;
    margin-left: -2px;
    padding-top: 2px;
    font-size: 20px;
    color: #85858b;
  }
  .address b {
    font-weight: 400;
    color: #15141a;
  }
  .zoom {
    background: #fff;
    width: 57px;
    height: 31px;
    border-radius: 5px;
    font-size: 16px;
  }
  .tools {
    width: 378px;
    padding: 0 26px 0 162px;
    display: flex;
    justify-content: space-between;
    flex: none;
  }
  .bookmarks {
    height: 43px;
    flex: none;
    display: flex;
    align-items: center;
    padding: 0 0 0 19px;
    gap: 16px;
    border-bottom: 1px solid #ccccd2;
  }
  .bookmarks a {
    display: flex;
    align-items: center;
    gap: 7px;
  }
  .bookmarks .second {
    margin-left: 11px;
  }
  .rainbow {
    height: 2px;
    flex: none;
    background: linear-gradient(90deg, #ff4b4b, #fffd80);
  }

  .page {
    flex: 1 1 0;
    min-height: 0;
    overflow: hidden;
    display: flex;
    font-family: 'Noto Sans CJK SC', 'Noto Sans', sans-serif;
    font-size: 15px;
    line-height: 20px;
    color: #dcdcfb;
  }
  aside {
    width: 307px;
    flex: none;
    background: #0e0a26;
    padding: 112px 19px 0;
    display: flex;
    flex-direction: column;
  }
  aside h2 {
    font-size: 26px;
    line-height: 34px;
    font-weight: 500;
  }
  aside label {
    margin: 24px 0 11px;
  }
  aside h3 {
    font-size: 19px;
    line-height: 28px;
    font-weight: 500;
    margin-top: 32px;
  }
  aside h3 + label {
    margin: 22px 0 10px;
  }
  .combo {
    height: 48px;
    border: 1px solid #f0f;
    border-radius: 9px;
    display: flex;
    align-items: stretch;
  }
  select {
    appearance: none;
    field-sizing: content;
    font: inherit;
    font-size: 17px;
    color: inherit;
    background: none;
    border: 0;
    padding: 0 3px 3px 14px;
  }
  .caret-box {
    width: 33px;
    margin: -1px 0;
    border: 1px solid #f0f;
    border-radius: 5px;
  }
  .chev {
    margin: auto 16px auto auto;
  }
  .advanced {
    margin-top: 19px;
    border: 1px solid #16132e;
    border-radius: 9px;
    padding: 14px 19px 19px;
  }
  .head {
    display: flex;
    align-items: center;
    justify-content: space-between;
  }
  .head span {
    padding-top: 2px;
  }
  .fold {
    width: 24px;
    height: 24px;
    border: 1px solid #078490;
  }
  .clear {
    margin-top: 18px;
    height: 52px;
    padding: 0 15px 2px;
    border: 1px solid #f0f;
    border-radius: 5px;
    font-size: 17px;
  }

  main {
    flex: 1;
    min-width: 0;
    background: #100e1a;
    position: relative;
  }
  .appbar {
    height: 70px;
    background: #fff;
    display: flex;
    align-items: center;
    justify-content: flex-end;
    gap: 5px;
    padding: 0 22px 2px 0;
  }
  .deploy,
  .dots {
    background: #0d0a26;
    border: 1px solid #f0f;
    border-radius: 5px;
  }
  .deploy {
    width: 83px;
    height: 38px;
    font-weight: 700;
  }
  .dots {
    width: 54px;
    height: 46px;
  }
  .dots span {
    width: 24px;
    height: 24px;
    border: 1px solid #078490;
    display: grid;
    place-items: center;
  }
  .content {
    padding: 7px 96px 0;
  }
  .chart {
    background: #fff;
    height: 540px;
    overflow: hidden;
  }
  .charthead {
    height: 47px;
    display: flex;
    justify-content: space-between;
    padding: 0 11px 0 5px;
  }
  h4 {
    font-size: 17px;
    line-height: 34px;
    font-weight: 700;
    color: #2f5566;
    text-shadow:
      1px 0 #0ff,
      -1px 0 #0ff,
      0 1px #0ff,
      0 -1px #0ff;
  }
  .modebar {
    display: flex;
    align-items: center;
    height: 43px;
  }
  .m1 {
    margin-left: 18px;
  }
  .m2 {
    margin-left: 20px;
  }
  .m3 {
    margin-left: 11px;
  }
  .m4 {
    margin-left: 18px;
  }
  .plot {
    display: grid;
    grid-template-columns: 161fr 949fr 311fr;
  }
  .map {
    grid-column: 2;
    width: 100%;
  }
  .coast,
  .border {
    fill: none;
    stroke: #444;
    stroke-width: 1.4px;
    vector-effect: non-scaling-stroke;
    stroke-linejoin: round;
  }
  .border {
    stroke: #808080;
    stroke-width: 1.1px;
  }
  .legend {
    padding: 31px 0 0 210px;
    color: #0ff;
    font-weight: 700;
  }
  .legend p {
    font-size: 14px;
    line-height: 24px;
    margin-bottom: 14px;
    text-shadow: 0 0 1px #0ff;
  }
  .scale {
    display: flex;
    gap: 7px;
    padding-left: 4px;
  }
  .bar {
    width: 21px;
    height: 315px;
    border: 1px solid #2ee0e0;
    background: linear-gradient(#fde725, #b5de2b 12%, #6ece58 23%, #35b779 34%, #1f9e89 45%, #26828e 56%, #31688e 67%, #3e4989 78%, #482878 89%, #440154);
  }
  .scale li {
    height: 79px;
    line-height: 38px;
    font-size: 13px;
    text-shadow: 0 0 1px #0ff;
  }
  .details {
    margin-top: 19px;
    border: 1px solid #191725;
    border-radius: 9px;
    padding: 15px 17px 20px 20px;
  }
  .details .head {
    padding-right: 2px;
  }
  .frame {
    margin-top: 17px;
    border: 1px solid #f0f;
    border-radius: 9px;
    padding: 1px;
  }
  table {
    width: 100%;
    table-layout: fixed;
    border-collapse: separate;
    border-spacing: 0;
    background: #fff;
    color: #31333f;
    border-radius: 8px;
    overflow: hidden;
  }
  th,
  td {
    height: 42px;
    padding: 0 9px 2px;
    text-align: left;
    font-size: 14px;
    font-weight: 400;
    border-bottom: 1px solid #e8e8ea;
  }
  th {
    height: 43px;
    background: #f8f9fb;
    color: #85868e;
    font-size: 15px;
    border-bottom-color: #000;
  }
  th:first-child,
  td:first-child {
    width: 641px;
    border-right: 1px solid #e8e8ea;
  }
  .meter {
    display: flex;
    align-items: center;
    gap: 9px;
    font-size: 13px;
  }
  .track {
    flex: 1;
    height: 8px;
    border-radius: 4px;
    background: #f1eef0;
    overflow: hidden;
  }
  .fill {
    height: 100%;
    background: #ff4b4b;
  }
  .scroll {
    position: absolute;
    right: 4px;
    top: 552px;
    width: 2px;
    height: 169px;
    background: #232130;
  }

  footer {
    height: 72px;
    flex: none;
    display: flex;
    align-items: center;
    border-top: 2px solid #cfcbd0;
    background: linear-gradient(90deg, #d9d9d9 24%, #f7e6fa 27%, #f9e3fa 31%, #f7d3f2 35%, #fbddfc 42%, #f9dffb 47%, #efebef 50%, #fbe2fc 53%, #fae0fc 60%, #f6d4ea 65%, #f4e4f8 69%, #eaeaea 71%, #d9d9d9 75%);
  }
  .widgets {
    margin-left: 24px;
  }
  .start {
    margin-left: 417px;
  }
  .search {
    width: 328px;
    height: 48px;
    margin-left: 87px;
    padding: 0 10px 0 15px;
    display: flex;
    align-items: center;
    gap: 15px;
    border-radius: 24px;
    background: rgba(255, 255, 255, 0.75);
    border: 1px solid #e2cfe2;
    border-bottom: 2px solid #cdbccd;
  }
  .search input {
    flex: 1;
    min-width: 0;
    border: 0;
    padding: 0;
    background: none;
    font: inherit;
    font-size: 19px;
  }
  .search input::placeholder {
    color: #666069;
    opacity: 1;
  }
  .app {
    position: relative;
    width: 58px;
    height: 58px;
    margin-left: 8px;
    border-radius: 6px;
  }
  .current {
    background: rgba(255, 255, 255, 0.65);
    box-shadow: 0 0 2px #cdbccd;
  }
  .app.on::after,
  .current::after {
    content: '';
    position: absolute;
    bottom: 0;
    left: 25px;
    width: 8px;
    height: 5px;
    border-radius: 3px;
    background: #87808a;
  }
  .app.current::after {
    left: 17px;
    width: 24px;
    background: #0078d4;
  }
  .chrome {
    margin-left: 74px;
    padding: 0 0 6px 8px;
  }
  .tray {
    margin-left: auto;
    padding-right: 29px;
    display: flex;
    align-items: center;
    gap: 12px;
  }
  .wifi {
    margin-left: 4px;
  }
  .clock {
    display: flex;
    flex-direction: column;
    text-align: right;
    margin-left: 8px;
    padding-bottom: 3px;
    line-height: 23px;
    color: #1b1b1b;
  }
  .badge {
    width: 24px;
    height: 24px;
    border-radius: 50%;
    background: #0078d4;
    color: #fff;
    font-size: 14px;
    text-align: center;
  }
</style>
